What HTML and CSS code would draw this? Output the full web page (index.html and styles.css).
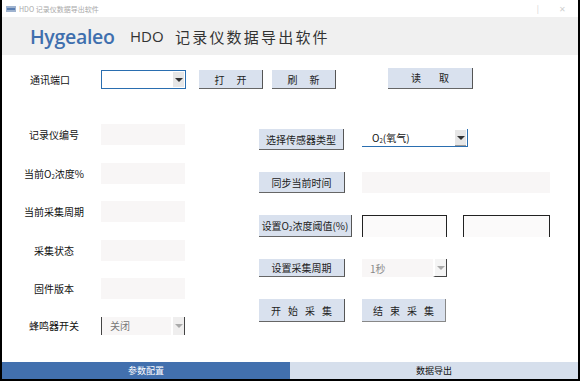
FILE: index.html
```html
<!DOCTYPE html>
<html lang="zh-CN">
<head>
  <meta charset="UTF-8" />
  <title>HDO 记录仪数据导出软件</title>
  <link rel="stylesheet" href="styles.css">
</head>
<body>
  <div class="window">
    <div class="titlebar">
      <svg class="app-icon" width="10" height="8" viewBox="0 0 10 8">
        <rect x="0" y="1" width="10" height="6" fill="#9fb3cf"/>
        <rect x="1" y="3" width="8" height="2" fill="#5b7fb3"/>
      </svg>
      <span class="title-text">HDO 记录仪数据导出软件</span>
      <span class="win-btns"><span class="min">|</span><span class="close">✕</span></span>
    </div>

    <div class="header">
      <span class="brand">Hygealeo</span>
      <span class="app-code">HDO</span>
      <span class="app-name">记录仪数据导出软件</span>
    </div>

    <div class="content">
      <div class="top-row">
        <span class="port-label">通讯端口</span>
        <div class="combo combo-port"><span class="combo-val"></span><span class="arrow"></span></div>
        <button class="btn btn-open spaced">打开</button>
        <button class="btn btn-refresh spaced">刷新</button>
        <button class="btn btn-read wide">读取</button>
      </div>

      <div class="main">
        <div class="left-col">
          <div class="field-row"><span class="label">记录仪编号</span><div class="field"></div></div>
          <div class="field-row"><span class="label">当前O<sub>2</sub>浓度%</span><div class="field"></div></div>
          <div class="field-row"><span class="label">当前采集周期</span><div class="field"></div></div>
          <div class="field-row"><span class="label">采集状态</span><div class="field"></div></div>
          <div class="field-row"><span class="label">固件版本</span><div class="field"></div></div>
          <div class="field-row"><span class="label">蜂鸣器开关</span>
            <div class="combo combo-beep"><span class="combo-val">关闭</span><span class="arrow light"></span></div>
          </div>
        </div>

        <div class="right-col">
          <div class="act-row h21">
            <button class="btn w85">选择传感器类型</button>
            <div class="combo combo-sensor"><span class="combo-val">O<sub>2</sub>(氧气)</span><span class="arrow"></span></div>
          </div>
          <div class="act-row h21">
            <button class="btn w86">同步当前时间</button>
            <div class="field field-time"></div>
          </div>
          <div class="act-row h22">
            <button class="btn w93">设置O<sub>2</sub>浓度阈值(%)</button>
            <div class="thresholds">
              <div class="input-box"></div>
              <div class="input-box second"></div>
            </div>
          </div>
          <div class="act-row h18">
            <button class="btn w86">设置采集周期</button>
            <div class="combo combo-period"><span class="combo-val">1秒</span><span class="arrow light"></span></div>
          </div>
          <div class="act-row h23">
            <button class="btn w86 gap7">开始采集</button>
            <button class="btn w84 gap7 plain">结束采集</button>
          </div>
        </div>
      </div>
    </div>

    <div class="tabs">
      <div class="tab active">参数配置</div>
      <div class="tab">数据导出</div>
    </div>
  </div>
</body>
</html>
```

FILE: styles.css
```css
body {
  margin: 0;
  background: #000;
  font-family: "Noto Sans CJK SC", "Noto Sans", sans-serif;
  font-size: 10px;
  color: #111;
}
.window {
  width: 576px;
  height: 379px;
  margin: 0 2px;
  background: #fff;
  display: flex;
  flex-direction: column;
}
.titlebar {
  height: 17px;
  display: flex;
  align-items: center;
  padding-left: 4px;
  color: #aaa;
  font-size: 7px;
}
.app-icon {
  margin-right: 3px;
}
.win-btns {
  margin-left: auto;
  display: flex;
  gap: 20px;
  margin-right: 12px;
  color: #d0d0d0;
  font-size: 8px;
}
.header {
  height: 38px;
  background: #f0f0f0;
  display: flex;
  align-items: center;
  padding-left: 28px;
}
.brand {
  font-family: "Open Sans", sans-serif;
  font-weight: 600;
  font-size: 19.5px;
  color: #3f6fae;
  letter-spacing: -0.3px;
  width: 100px;
}
.app-code {
  font-family: "Open Sans", sans-serif;
  font-size: 15px;
  color: #333;
  width: 45px;
}
.app-name {
  font-size: 15px;
  color: #333;
  letter-spacing: 2.2px;
}
.content {
  flex: 1;
  padding-top: 15px;
}
.top-row {
  display: flex;
  align-items: center;
  height: 19px;
}
.port-label {
  margin-left: 28px;
  width: 71px;
}
.combo {
  display: flex;
  align-items: center;
  box-sizing: border-box;
  background: #fff;
}
.combo-val {
  flex: 1;
  padding-left: 8px;
  white-space: nowrap;
}
.arrow {
  width: 11px;
  align-self: stretch;
  background: #e6e6e6;
  position: relative;
}
.arrow::after {
  content: "";
  position: absolute;
  left: 2px;
  top: 50%;
  margin-top: -2px;
  border-left: 4px solid transparent;
  border-right: 4px solid transparent;
  border-top: 4px solid #333;
}
.arrow.light::after {
  border-top-color: #aaa;
}
.combo-port {
  width: 85px;
  height: 19px;
  border: 1px solid #2a6eb0;
}
.combo-port .arrow {
  margin: 1px;
}
.btn {
  font-family: inherit;
  font-size: 10px;
  color: #222;
  background: #d9e1ee;
  border: none;
  border-right: 1px solid #555;
  border-bottom: 1px solid #666;
  padding: 0;
  box-sizing: border-box;
  height: 100%;
  white-space: nowrap;
}
.btn sub, .label sub, .combo-val sub {
  font-size: 6px;
  vertical-align: -1px;
}
.btn-open {
  margin-left: 13px;
  width: 64px;
}
.btn-refresh {
  margin-left: 9px;
  width: 64px;
}
.btn-read {
  margin-left: 52px;
  width: 85px;
  height: 21px;
  margin-top: -3px;
}
.spaced {
  letter-spacing: 12px;
  padding-left: 12px;
}
.wide {
  letter-spacing: 18px;
  padding-left: 18px;
}
.gap7 {
  letter-spacing: 7px;
  padding-left: 7px;
}
.plain {
  border-right-color: #888;
  border-bottom-color: #888;
}
.main {
  display: flex;
  margin-top: 35px;
}
.left-col {
  display: flex;
  flex-direction: column;
  gap: 17.6px;
  margin-left: 18px;
}
.field-row {
  display: flex;
  align-items: center;
  height: 21px;
}
.field-row:last-child {
  height: 18px;
}
.label {
  width: 68px;
  text-align: center;
  margin-right: 13px;
  white-space: nowrap;
}
.field {
  width: 84px;
  height: 21px;
  background: #f8f6f6;
}
.combo-beep {
  width: 84px;
  height: 18px;
  background: #f8f6f6;
  border-left: 1px solid #444;
  border-right: 1px solid #444;
  color: #777;
}
.combo-beep .arrow {
  background: #efeeee;
  border-left: 2px solid #fff;
}
.right-col {
  margin-left: 74px;
  margin-top: 5px;
  display: flex;
  flex-direction: column;
  gap: 22px;
}
.act-row {
  display: grid;
  grid-template-columns: 103px auto;
  align-items: stretch;
}
.h21 { height: 21px; }
.h22 { height: 22px; }
.h18 { height: 18px; }
.h23 { height: 23px; }
.w84 { width: 84px; }
.w85 { width: 85px; }
.w86 { width: 86px; }
.w93 { width: 93px; }
.combo-sensor {
  width: 106px;
  height: 18px;
  border-bottom: 1px solid #2a6eb0;
  border-right: 1px solid #2a6eb0;
}
.combo-sensor .arrow {
  margin: 1px 1px 0 0;
  border-bottom: 1px solid #999;
}
.combo-sensor .combo-val {
  padding-left: 10px;
}
.field-time {
  width: 188px;
  height: 21px;
}
.thresholds {
  display: flex;
  gap: 16px;
}
.input-box {
  width: 85px;
  box-sizing: border-box;
  border: 1px solid #222;
  border-bottom: none;
  background: #fbfafa;
}
.input-box.second {
  width: 87px;
}
.combo-period {
  width: 85px;
  height: 18px;
  background: #f8f6f6;
  border-right: 1px solid #444;
  color: #888;
}
.combo-period .arrow {
  background: #f4f4f4;
  border-left: 2px solid #fff;
  border-bottom: 1px solid #444;
}
.tabs {
  height: 17px;
  display: flex;
  font-size: 9px;
}
.tab {
  flex: 1;
  display: flex;
  align-items: center;
  justify-content: center;
  background: #d6dfec;
  color: #111;
}
.tab.active {
  flex: 0 0 288px;
  background: #4270ae;
  color: #fff;
}
```
